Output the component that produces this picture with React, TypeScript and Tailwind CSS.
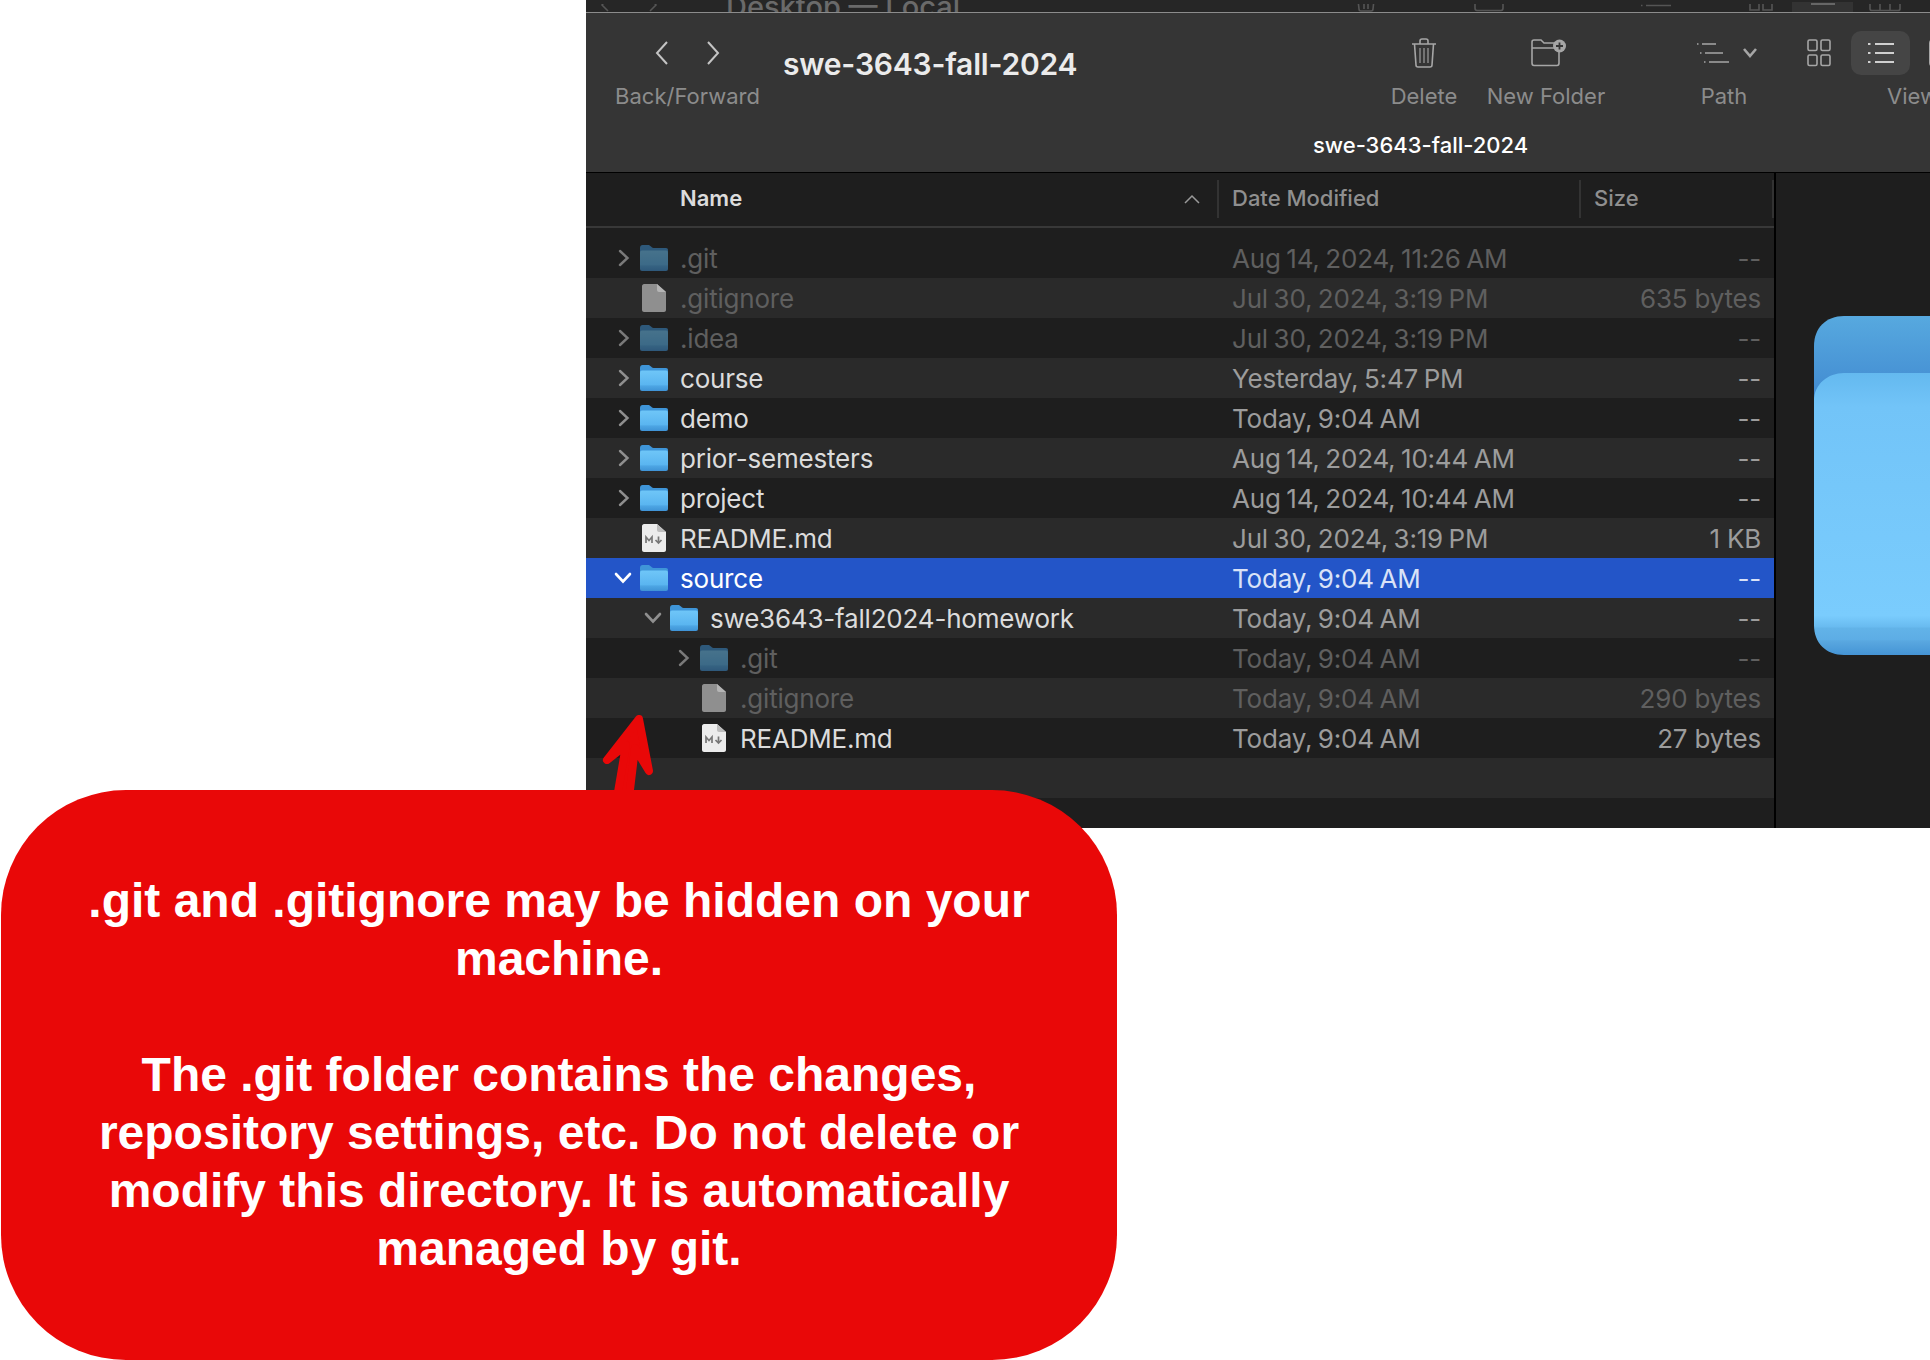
const ui = "font-['Inter','Liberation_Sans',sans-serif]";

type Row = {
  name: string;
  date: string;
  size: string;
  kind: "folder" | "file" | "md";
  level?: number;
  open?: boolean;
  hidden?: boolean;
  selected?: boolean;
};

const rows: Row[] = [
  { name: ".git", date: "Aug 14, 2024, 11:26 AM", size: "--", kind: "folder", hidden: true },
  { name: ".gitignore", date: "Jul 30, 2024, 3:19 PM", size: "635 bytes", kind: "file", hidden: true },
  { name: ".idea", date: "Jul 30, 2024, 3:19 PM", size: "--", kind: "folder", hidden: true },
  { name: "course", date: "Yesterday, 5:47 PM", size: "--", kind: "folder" },
  { name: "demo", date: "Today, 9:04 AM", size: "--", kind: "folder" },
  { name: "prior-semesters", date: "Aug 14, 2024, 10:44 AM", size: "--", kind: "folder" },
  { name: "project", date: "Aug 14, 2024, 10:44 AM", size: "--", kind: "folder" },
  { name: "README.md", date: "Jul 30, 2024, 3:19 PM", size: "1 KB", kind: "md" },
  { name: "source", date: "Today, 9:04 AM", size: "--", kind: "folder", open: true, selected: true },
  { name: "swe3643-fall2024-homework", date: "Today, 9:04 AM", size: "--", kind: "folder", level: 1, open: true },
  { name: ".git", date: "Today, 9:04 AM", size: "--", kind: "folder", level: 2, hidden: true },
  { name: ".gitignore", date: "Today, 9:04 AM", size: "290 bytes", kind: "file", level: 2, hidden: true },
  { name: "README.md", date: "Today, 9:04 AM", size: "27 bytes", kind: "md", level: 2 },
];

function FolderIcon({ dim }: { dim?: boolean }) {
  return (
    <svg width="28" height="26" viewBox="0 0 28 26" className={dim ? "opacity-50" : ""}>
      <defs>
        <linearGradient id="folderFront" x1="0" y1="0" x2="0" y2="1">
          <stop offset="0" stopColor="#6fc6f8" />
          <stop offset="0.7" stopColor="#5ab5f0" />
          <stop offset="0.75" stopColor="#4da6e4" />
          <stop offset="1" stopColor="#3f93d6" />
        </linearGradient>
      </defs>
      <path
        d="M0 3C0 1 1 0 2.500 0H8C9.500 0 10 .6 11 1.600C11.800 2.400 12.200 3 13.500 3H26C27.200 3 28 3.800 28 5V12H0Z"
        fill="#3f95d8"
      />
      <rect x="0" y="5.500" width="28" height="20.500" rx="2" fill="url(#folderFront)" />
    </svg>
  );
}

function FileIcon({ md }: { md?: boolean }) {
  if (md) {
    return (
      <svg width="24" height="28" viewBox="0 0 24 28">
        <path d="M2 0H15L24 8V26C24 27 23 28 22 28H2C1 28 0 27 0 26V2C0 1 1 0 2 0Z" fill="#ececec" />
        <path d="M15 0L24 8H17C16 8 15 7 15 6Z" fill="#bdbdbd" />
        <path d="M4 19V13L7 16.500L10 13V19" fill="none" stroke="#777" strokeWidth="1.700" />
        <path d="M16.500 12.500V18.500M13.500 16L16.500 19L19.500 16" fill="none" stroke="#777" strokeWidth="1.700" />
      </svg>
    );
  }
  return (
    <svg width="24" height="28" viewBox="0 0 24 28">
      <path d="M2 0H15L24 8V26C24 27 23 28 22 28H2C1 28 0 27 0 26V2C0 1 1 0 2 0Z" fill="#8f8f8f" />
      <path d="M15 0L24 8H17C16 8 15 7 15 6Z" fill="#b5b5b5" />
    </svg>
  );
}

function Disclosure({ open, color }: { open?: boolean; color: string }) {
  if (open) {
    return (
      <svg width="18" height="12" viewBox="0 0 18 12" fill="none" stroke={color} strokeWidth="2.600" strokeLinecap="round">
        <path d="M2 2L9 9.500L16 2" />
      </svg>
    );
  }
  return (
    <svg width="12" height="18" viewBox="0 0 12 18" fill="none" stroke={color} strokeWidth="2.400" strokeLinecap="round">
      <path d="M2 2L9.500 9L2 16" />
    </svg>
  );
}

function FinderRow({ row, index }: { row: Row; index: number }) {
  const level = row.level ?? 0;
  const bg = row.selected ? "bg-[#2355c8]" : index % 2 === 0 ? "bg-[#1e1e1e]" : "bg-[#2a2a2a]";
  const nameColor = row.selected ? "text-white" : row.hidden ? "text-[#5f5f5f]" : "text-[#dcdcdc]";
  const infoColor = row.selected ? "text-[#d9e2f7]" : row.hidden ? "text-[#5f5f5f]" : "text-[#9c9c9c]";
  const chevronColor = row.selected ? "#ffffff" : row.hidden ? "#7a7a7a" : "#8f8f8f";

  return (
    <div className={`flex h-10 items-center text-[26px] tracking-[-0.2px] ${bg}`}>
      <div className="flex w-[646px] items-center">
        <div style={{ width: level * 30 }} className="shrink-0" />
        <div className="flex w-[94px] shrink-0 items-center">
          <div className={`flex w-[54px] shrink-0 justify-end ${row.open ? "pr-[8px]" : "pr-[10px]"}`}>
            {row.kind === "folder" && <Disclosure open={row.open} color={chevronColor} />}
          </div>
          {row.kind === "folder" ? (
            <FolderIcon dim={row.hidden} />
          ) : (
            <div className="ml-[2px]">
              <FileIcon md={row.kind === "md"} />
            </div>
          )}
        </div>
        <span className={nameColor}>{row.name}</span>
      </div>
      <span className={`flex-1 [word-spacing:-1.5px] ${infoColor}`}>{row.date}</span>
      <span className={`pr-[13px] ${infoColor}`}>{row.size}</span>
    </div>
  );
}

function Toolbar() {
  return (
    <div className="h-[159px] shrink-0 bg-[#353535]">
      <div className="flex h-[116px] pt-[25px]">
        <div className="flex w-[197px] shrink-0 flex-col items-center pl-[6px]">
          <div className="flex h-[30px] items-center gap-[35px]">
            <svg width="16" height="26" viewBox="0 0 16 26" fill="none" stroke="#c4c4c4" strokeWidth="2">
              <path d="M13 2L3 13L13 24" />
            </svg>
            <svg width="16" height="26" viewBox="0 0 16 26" fill="none" stroke="#c4c4c4" strokeWidth="2">
              <path d="M3 2L13 13L3 24" />
            </svg>
          </div>
          <div className="mt-[12px] whitespace-nowrap text-[22px] text-[#8c8c8c]">Back/Forward</div>
        </div>
        <div className="w-[594px] shrink-0 pt-[4px] text-[30px] font-semibold tracking-[-0.2px] text-[#ebebeb]">
          swe-3643-fall-2024
        </div>

        <div className="flex w-[94px] shrink-0 flex-col items-center">
          <svg width="26" height="30" viewBox="0 0 26 30" fill="none" stroke="#a6a6a6" strokeWidth="1.600">
            <path d="M1 6H25M9 6V3C9 1.800 10 1 11 1H15C16 1 17 1.800 17 3V6" />
            <path d="M3.500 6L5 27C5 28.200 6 29 7 29H19C20 29 21 28.200 21 27L22.500 6" />
            <path d="M9 10V25M13 10V25M17 10V25" strokeWidth="1.100" />
          </svg>
          <div className="mt-[12px] text-[22px] text-[#8c8c8c]">Delete</div>
        </div>
        <div className="flex w-[150px] shrink-0 flex-col items-center">
          <svg width="36" height="30" viewBox="0 0 36 30" fill="none" stroke="#a6a6a6" strokeWidth="1.600" className="ml-[6px]">
            <path d="M1 10V4C1 3 2 2 3 2H10L13 5H24M1 10H24M1 10V25C1 26.500 2 27.500 3 27.500H26C27 27.500 28 26.500 28 25V14" />
            <circle cx="28.500" cy="8" r="6.500" fill="#a6a6a6" stroke="none" />
            <path d="M28.500 4.500V11.500M25 8H32" stroke="#353535" strokeWidth="1.800" />
          </svg>
          <div className="mt-[12px] whitespace-nowrap text-[22px] text-[#8c8c8c]">New Folder</div>
        </div>
        <div className="ml-[48px] flex w-[110px] shrink-0 flex-col items-center">
          <div className="ml-[6px] flex h-[30px] items-center gap-[12px]">
            <svg width="34" height="22" viewBox="0 0 34 22" fill="none" stroke="#a6a6a6" strokeWidth="1.700">
              <path d="M1 2H2.500M6 2H20M4 11H5.500M9 11H27M8 20H9.500M13 20H33" />
            </svg>
            <svg width="16" height="12" viewBox="0 0 16 12" fill="none" stroke="#a6a6a6" strokeWidth="2.600">
              <path d="M2 2L8 9L14 2" />
            </svg>
          </div>
          <div className="mt-[12px] text-[22px] text-[#8c8c8c]">Path</div>
        </div>
        <div className="ml-[28px] flex shrink-0 flex-col">
          <div className="flex h-[30px] items-center">
            <svg width="24" height="30" viewBox="0 0 24 30" fill="none" stroke="#a6a6a6" strokeWidth="1.600">
              <rect x="1" y="2" width="9" height="10.500" rx="1.500" />
              <rect x="14" y="2" width="9" height="10.500" rx="1.500" />
              <rect x="1" y="17" width="9" height="10.500" rx="1.500" />
              <rect x="14" y="17" width="9" height="10.500" rx="1.500" />
            </svg>
            <div className="ml-[20px] flex h-[44px] w-[59px] shrink-0 items-center justify-center rounded-[10px] bg-[#454545]">
              <svg width="28" height="24" viewBox="0 0 28 24" fill="none" stroke="#d0d0d0" strokeWidth="2">
                <path d="M1 3H3.500M8 3H27M1 12H3.500M8 12H27M1 21H3.500M8 21H27" />
              </svg>
            </div>
            <div className="ml-[19px] h-[26px] w-[8px] shrink-0 rounded-l-[3px] border-2 border-r-0 border-[#a6a6a6]" />
          </div>
          <div className="mt-[12px] pl-[80px] text-[22px] text-[#8c8c8c]">View</div>
        </div>
      </div>
      <div className="pl-[727px] text-[22px] font-medium whitespace-nowrap text-white">swe-3643-fall-2024</div>
    </div>
  );
}

// window behind this one, only its bottom edge still shows
function BehindStrip() {
  return (
    <div className="flex h-[12px] shrink-0 items-end overflow-hidden bg-[#262626] text-[#6a6a6a]">
      <svg width="60" height="8" viewBox="0 0 60 8" fill="none" stroke="#555" strokeWidth="1.600" className="ml-[14px] shrink-0">
        <path d="M8 -6L2 1L8 7M50 -6L56 1L50 7" />
      </svg>
      <div className="ml-[66px] w-[630px] shrink-0 text-[29px] leading-[30px] font-medium whitespace-nowrap">
        <span className="relative top-[10px]">Desktop — Local</span>
      </div>
      <svg width="20" height="8" viewBox="0 0 20 8" fill="none" stroke="#555" strokeWidth="1.600" className="shrink-0">
        <path d="M2 -4L3 5C3 6 4 7 5 7H15C16 7 17 6 17 5L18 -4M8 -2V5M12 -2V5" />
      </svg>
      <svg width="30" height="8" viewBox="0 0 30 8" fill="none" stroke="#555" strokeWidth="1.600" className="ml-[98px] shrink-0">
        <path d="M1 -4V4C1 5.500 2 6.500 3 6.500H27C28 6.500 29 5.500 29 4V-4" />
      </svg>
      <svg width="44" height="8" viewBox="0 0 44 8" fill="none" stroke="#555" strokeWidth="1.600" className="ml-[131px] shrink-0">
        <path d="M6 1.500H7.500M11 1.500H36" />
      </svg>
      <svg width="24" height="8" viewBox="0 0 24 8" fill="none" stroke="#555" strokeWidth="1.600" className="ml-[70px] shrink-0">
        <path d="M1 -4V6H10V-4M14 -4V6H23V-4" />
      </svg>
      <div className="ml-[19px] flex h-[10px] w-[61px] shrink-0 items-start justify-center bg-[#333]">
        <div className="mt-[1px] h-[2px] w-[24px] bg-[#666]" />
      </div>
      <svg width="32" height="8" viewBox="0 0 32 8" fill="none" stroke="#555" strokeWidth="1.600" className="ml-[16px] shrink-0">
        <path d="M1 -4V5C1 6 2 6.500 3 6.500H29C30 6.500 31 6 31 5V-4M11 -4V6M21 -4V6" />
      </svg>
    </div>
  );
}

function BigFolder() {
  return (
    <svg width="116" height="344" viewBox="0 0 116 344" className="shrink-0">
      <defs>
        <linearGradient id="bigBack" x1="0" y1="0" x2="0" y2="1">
          <stop offset="0" stopColor="#57a9df" />
          <stop offset="1" stopColor="#3a80cc" />
        </linearGradient>
        <linearGradient id="bigFront" x1="0" y1="0" x2="0" y2="1">
          <stop offset="0" stopColor="#64b9ef" />
          <stop offset="0.12" stopColor="#72c4f8" />
          <stop offset="0.86" stopColor="#7accfd" />
          <stop offset="0.9" stopColor="#69bbf0" />
          <stop offset="0.905" stopColor="#62b3e8" />
          <stop offset="0.945" stopColor="#5dade5" />
          <stop offset="0.95" stopColor="#5aa8e0" />
          <stop offset="1" stopColor="#4594d5" />
        </linearGradient>
      </defs>
      <path d="M0 30C0 12 12 0 30 0H120V110H0Z" fill="url(#bigBack)" />
      <path d="M0 339V85C0 68 14 57 30 57H120V339H30C12 339 0 327 0 309Z" fill="url(#bigFront)" />
    </svg>
  );
}

export default function App() {
  return (
    <div className={`relative h-[1360px] w-[1930px] overflow-hidden bg-white ${ui}`}>
      {/* finder window, cut off at the right edge */}
      <div className="ml-[586px] flex h-[828px] w-[1344px] flex-col overflow-hidden bg-[#1e1e1e]">
        <BehindStrip />
        <div className="h-px shrink-0 bg-[#8c8c8c]" />
        <Toolbar />
        <div className="h-px shrink-0 bg-black" />
        <div className="flex min-h-0 flex-1">
          <div className="w-[1188px] shrink-0 bg-[#1e1e1e]">
            <div className="flex h-[55px] items-center border-b-2 border-[#383838] pb-[2px] text-[22px]">
              <div className="flex w-[631px] items-center pl-[94px] font-semibold text-[#dcdcdc]">
                <span className="flex-1">Name</span>
                <svg width="16" height="10" viewBox="0 0 16 10" fill="none" stroke="#9a9a9a" strokeWidth="1.500" className="mr-[17px]">
                  <path d="M1 9L8 2L15 9" />
                </svg>
              </div>
              <div className="h-[38px] w-[2px] bg-[#333]" />
              <div className="w-[360px] pl-[13px] font-medium text-[#8f8f8f]">Date Modified</div>
              <div className="h-[38px] w-[2px] bg-[#333]" />
              <div className="w-[191px] pl-[13px] font-medium text-[#8f8f8f]">Size</div>
              <div className="h-[38px] w-[2px] bg-[#333]" />
            </div>
            <div className="pt-[10px]">
              {rows.map((row, i) => (
                <FinderRow key={i} row={row} index={i} />
              ))}
              <div className="h-10 bg-[#2a2a2a]" />
            </div>
          </div>
          <div className="w-[2px] shrink-0 bg-black" />
          <div className="flex flex-1 overflow-hidden pl-[38px] pt-[143px]">
            <BigFolder />
          </div>
        </div>
      </div>

      {/* hand drawn arrow on top of the window */}
      <svg width="70" height="90" viewBox="0 0 70 90" className="absolute left-[590px] top-[708px]">
        <path
          d="M49 11L17 52L36 37L27 90H39L45 40L59 63Z"
          fill="#e90808"
          stroke="#e90808"
          strokeWidth="8"
          strokeLinejoin="round"
        />
      </svg>

      {/* callout */}
      <div className="relative z-10 -mt-[38px] ml-px flex h-[570px] w-[1116px] items-center justify-center rounded-[125px] bg-[#e90808] px-[60px] text-center font-['Liberation_Sans',Arial,sans-serif] text-[48px] leading-[58px] font-bold text-white">
        <div>
          <p>.git and .gitignore may be hidden on your machine.</p>
          <p>&nbsp;</p>
          <p>
            The .git folder contains the changes, repository settings, etc. Do not delete or modify this directory. It is
            automatically managed by git.
          </p>
        </div>
      </div>
    </div>
  );
}
